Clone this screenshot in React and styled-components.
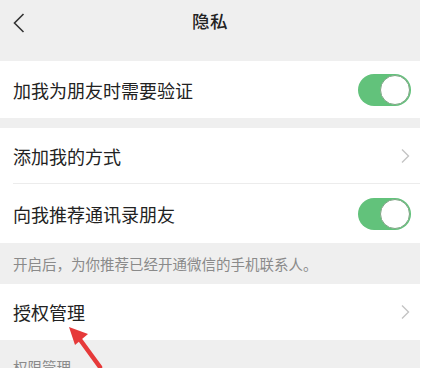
import React from "react";
import styled, { createGlobalStyle } from "styled-components";

const Global = createGlobalStyle`
  html, body { margin: 0; padding: 0; background: #ffffff; }
  body { font-family: "Noto Sans CJK SC", "Noto Sans", sans-serif; }
  * { box-sizing: border-box; }
`;

const Page = styled.div`
  position: relative;
  width: 420px;
  height: 368px;
  overflow: hidden;
  background: #efefef;
`;

const Header = styled.div`
  height: 61px;
  display: grid;
  grid-template-columns: 1fr auto 1fr;
  align-items: start;
  padding: 9px 13px 0;
`;

const Back = styled.button`
  justify-self: start;
  border: 0;
  background: none;
  padding: 4px 0 0 0;
  display: flex;
  cursor: pointer;
`;

const Title = styled.div`
  font-size: 17.5px;
  font-weight: 500;
  color: #222;
  line-height: 24px;
  letter-spacing: 0.5px;
`;

const Group = styled.div`
  background: #fff;
  margin-bottom: ${(p) => p.$gap || 0}px;
`;

const Row = styled.div`
  height: ${(p) => p.$h || 57}px;
  display: flex;
  align-items: center;
  justify-content: space-between;
  padding: 0 9px 0 13px;
  position: relative;
  ${(p) =>
    p.$divider &&
    `&::after{content:"";position:absolute;left:13px;right:0;bottom:0;height:1px;background:#ececec;}`}
`;

const Label = styled.span`
  font-size: 18px;
  color: #222;
  line-height: 24px;
`;

const Toggle = styled.div`
  width: 53px;
  height: 32px;
  border-radius: 16px;
  background: #62c27b;
  position: relative;
  &::after {
    content: "";
    position: absolute;
    right: 1px;
    top: 1px;
    width: 30px;
    height: 30px;
    border-radius: 50%;
    background: #fff;
    border: 1.5px solid #7fa585;
    box-sizing: border-box;
  }
`;

const Chevron = styled.svg`
  width: 10px;
  height: 16px;
  margin-right: 1px;
`;

const Hint = styled.div`
  height: 41px;
  display: flex;
  align-items: center;
  padding: 0 13px;
  font-size: 14.5px;
  color: #8a8a8a;
`;

const SectionTitle = styled.div`
  padding: 17px 13px 0;
  font-size: 14.5px;
  color: #8a8a8a;
  line-height: 20px;
`;

const Arrow = styled.svg`
  position: absolute;
  left: 60px;
  top: 320px;
  width: 50px;
  height: 48px;
  pointer-events: none;
`;

const RightChevron = () => (
  <Chevron viewBox="0 0 10 16">
    <path d="M2 1.5 L8.5 8 L2 14.5" fill="none" stroke="#c4c4c4" strokeWidth="1.4" />
  </Chevron>
);

export default function App() {
  return (
    <>
      <Global />
      <Page>
        <Header>
          <Back aria-label="back">
            <svg width="12" height="20" viewBox="0 0 12 20">
              <path d="M10.5 1 L1.5 10 L10.5 19" fill="none" stroke="#333" strokeWidth="1.6" />
            </svg>
          </Back>
          <Title>隐私</Title>
          <div />
        </Header>

        <Group $gap={10}>
          <Row $h={57}>
            <Label>加我为朋友时需要验证</Label>
            <Toggle />
          </Row>
        </Group>

        <Group>
          <Row $h={56} $divider>
            <Label>添加我的方式</Label>
            <RightChevron />
          </Row>
          <Row $h={59}>
            <Label>向我推荐通讯录朋友</Label>
            <Toggle />
          </Row>
        </Group>

        <Hint>开启后，为你推荐已经开通微信的手机联系人。</Hint>

        <Group>
          <Row $h={56}>
            <Label>授权管理</Label>
            <RightChevron />
          </Row>
        </Group>

        <SectionTitle>权限管理</SectionTitle>

        <Arrow viewBox="0 0 50 48">
          <path d="M40 47 L21 21" stroke="#e63a3a" strokeWidth="4.5" strokeLinecap="round" />
          <path d="M9 7 L28 14 L15 25 Z" fill="#e63a3a" />
        </Arrow>
      </Page>
    </>
  );
}
